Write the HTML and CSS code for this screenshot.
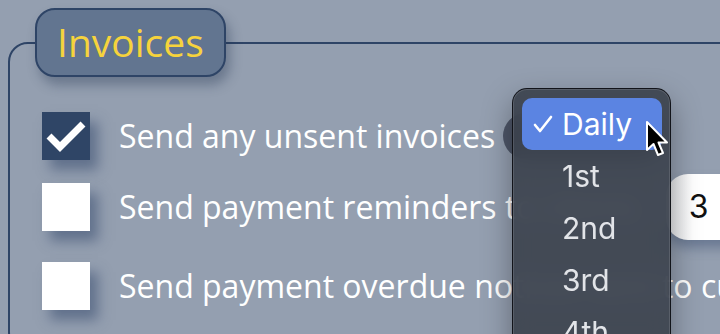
FILE: index.html
```html
<!DOCTYPE html>
<html>
<head>
<meta charset="utf-8">
<link rel="stylesheet" href="styles.css">
</head>
<body>
<fieldset class="group">
  <legend class="group-title">Invoices</legend>
  <div class="row row-1">
    <span class="box checked">
      <svg width="48" height="48" viewBox="0 0 48 48"><polyline points="7,24 18,35 41,12" fill="none" stroke="#fff" stroke-width="7"/></svg>
    </span>
    <span class="label">Send any unsent invoices</span>
    <span class="select"></span>
  </div>
  <div class="row row-2">
    <span class="box"></span>
    <span class="label">Send payment reminders to clients</span>
    <span class="num">3</span>
  </div>
  <div class="row row-3">
    <span class="box"></span>
    <span class="label">Send payment overdue notices sent to customers</span>
  </div>
</fieldset>

<div class="menu">
  <div class="item selected">
    <svg class="tick" width="20" height="20" viewBox="0 0 20 20"><polyline points="2,11 7,17 18,3" fill="none" stroke="#fff" stroke-width="2.6" stroke-linecap="round" stroke-linejoin="round"/></svg>
    <span>Daily</span>
  </div>
  <div class="item"><span>1st</span></div>
  <div class="item"><span>2nd</span></div>
  <div class="item"><span>3rd</span></div>
  <div class="item"><span>4th</span></div>
</div>

<svg class="cursor" width="24" height="40" viewBox="0 0 24 40">
  <path d="M2 2 L2 30 L8.5 24 L13 35 L18 33 L13.5 22.5 L22 22.5 Z" fill="#000" stroke="#fff" stroke-width="2" stroke-linejoin="round"/>
</svg>
</body>
</html>
```

FILE: styles.css
```css
html, body {
  margin: 0;
  padding: 0;
  overflow: hidden;
}
body {
  width: 720px;
  height: 334px;
  background: #949fb0;
  font-family: "Open Sans", "Liberation Sans", sans-serif;
  position: relative;
}
.group {
  margin: 8px 0 0 8px;
  padding: 0 0 40px 0;
  width: 780px;
  border: 2px solid #2e4466;
  border-radius: 20px;
  box-sizing: border-box;
}
.group-title {
  margin-left: 25px;
  padding: 0 20px;
  height: 69px;
  box-sizing: border-box;
  background: #627590;
  border: 2px solid #2e4466;
  border-radius: 20px;
  color: #f6d33c;
  font-size: 39px;
  line-height: 63px;
  box-shadow: 4px 8px 12px rgba(30, 45, 75, 0.35);
}
.row {
  display: flex;
  align-items: center;
  padding-left: 32px;
  white-space: nowrap;
}
.row-1 { height: 48px; margin-top: 35px; }
.row-2 { height: 66px; margin-top: 14px; }
.row-3 { height: 48px; margin-top: 22px; }
.box {
  flex: none;
  width: 48px;
  height: 48px;
  background: #fff;
  box-shadow: 8px 10px 12px rgba(55, 75, 110, 0.55);
  display: block;
}
.box.checked { background: #2f4566; }
.box svg { display: block; }
.label {
  margin-left: 29px;
  color: #fff;
  font-size: 32px;
  line-height: 44px;
}
.select {
  flex: none;
  margin-left: 8px;
  width: 160px;
  height: 46px;
  border-radius: 23px;
  background: #4e5668;
}
.num {
  flex: none;
  margin-left: 26px;
  width: 120px;
  height: 66px;
  border-radius: 22px;
  background: linear-gradient(90deg, #dfe1e5 0%, #fff 22%);
  color: #111;
  font-family: Inter, "Liberation Sans", sans-serif;
  font-size: 32px;
  line-height: 66px;
  padding-left: 23px;
  box-sizing: border-box;
  box-shadow: 0 8px 12px rgba(55, 75, 110, 0.45);
}
.menu {
  position: absolute;
  left: 512px;
  top: 88px;
  width: 159px;
  height: 290px;
  box-sizing: border-box;
  padding: 9px 8px 0 9px;
  border-radius: 15px;
  border: 1px solid rgba(10, 12, 16, 0.85);
  background: rgba(58, 64, 75, 0.9);
  backdrop-filter: blur(10px);
  box-shadow: inset 0 0 0 1px rgba(255, 255, 255, 0.12), 0 12px 30px rgba(0, 0, 0, 0.35);
  font-family: Inter, "Liberation Sans", sans-serif;
}
.item {
  height: 52px;
  display: flex;
  align-items: center;
  padding-left: 40px;
  position: relative;
  color: #e2e4e8;
  font-size: 30px;
  border-radius: 10px;
}
.item.selected {
  background: #5b84e2;
  color: #fff;
}
.tick {
  position: absolute;
  left: 11px;
  top: 16px;
}
.cursor {
  position: absolute;
  left: 645px;
  top: 120px;
}
```
